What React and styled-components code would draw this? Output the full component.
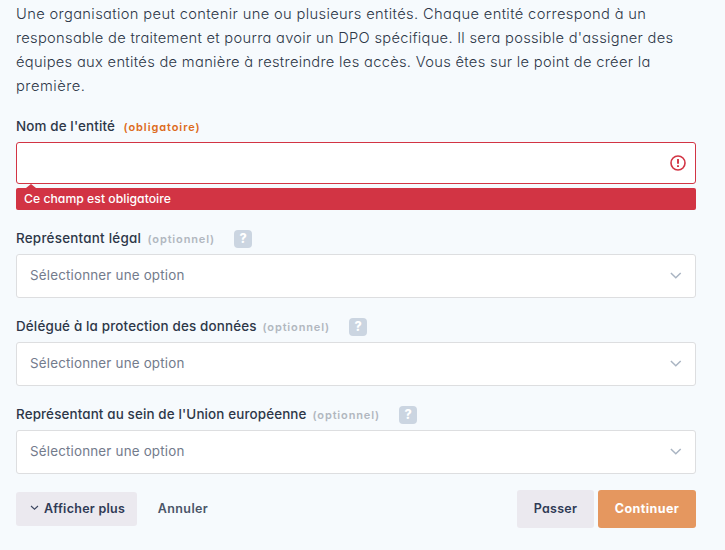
import React from "react";
import styled, { createGlobalStyle } from "styled-components";

const GlobalStyle = createGlobalStyle`
  * { box-sizing: border-box; }
  body {
    margin: 0;
    background: #f6fafd;
    color: #2d3748;
    font-family: Inter, "Open Sans", sans-serif;
    font-feature-settings: "cv11", "ss03";
  }
`;

const Page = styled.main`
  width: 725px;
  height: 550px;
  overflow: hidden;
  padding: 2px 29px 0 16px;
  display: flex;
  flex-direction: column;
`;

const Intro = styled.p`
  margin: 0;
  height: 112px;
  font-size: 14.7px;
  font-weight: 300;
  line-height: 24px;
  white-space: nowrap;
`;

const Line = styled.span`
  display: block;
  letter-spacing: ${(p) => p.$tracking}px;
`;

const Field = styled.section`
  display: flex;
  flex-direction: column;
  height: ${(p) => (p.$invalid ? 112 : 88)}px;
`;

const FieldHead = styled.div`
  display: flex;
  align-items: center;
  height: 28px;
  padding-bottom: 2px;
  white-space: nowrap;
`;

const Label = styled.label`
  width: ${(p) => p.$width}px;
  padding-bottom: 2px;
  font-size: 13.4px;
  font-weight: 500;
  line-height: 20px;
  letter-spacing: ${(p) => p.$tracking}px;
`;

const Hint = styled.span`
  width: ${(p) => (p.$required ? 80 : 86.5)}px;
  padding-bottom: 1px;
  font-size: 11px;
  font-weight: 600;
  line-height: 18px;
  letter-spacing: ${(p) => (p.$required ? 0.92 : 0.85)}px;
  color: ${(p) => (p.$required ? "#dd6b20" : "#b1b7bf")};
`;

const Help = styled.button`
  display: grid;
  place-items: center;
  width: 18px;
  height: 18px;
  padding: 0;
  border: 0;
  border-radius: 4px;
  background: #cbd5e1;
  color: #fff;
  font: 800 12.5px/18px Inter, sans-serif;
`;

const Control = styled.div`
  display: flex;
  align-items: center;
  justify-content: space-between;
  flex: none;
  height: ${(p) => (p.$invalid ? 42 : 44)}px;
  padding: 0 ${(p) => (p.$invalid ? 9 : 13)}px 0 13px;
  border: 1px solid ${(p) => (p.$invalid ? "#d23444" : "#dddee0")};
  border-radius: 3px;
  background: #fff;
`;

const TextInput = styled.input`
  flex: 1;
  min-width: 0;
  border: 0;
  outline: 0;
  background: transparent;
  font: inherit;
`;

const Placeholder = styled.span`
  padding-bottom: 2px;
  font-size: 13.4px;
  line-height: 20px;
  letter-spacing: 0.18px;
  color: #737b8c;
`;

const ErrorNote = styled.div`
  flex: none;
  margin-top: 4px;
  height: 22px;
  padding-left: 8px;
  border-radius: 2px;
  background: #d23444;
  color: #fff;
  font-size: 12.2px;
  font-weight: 500;
  line-height: 22px;
  letter-spacing: 0.03px;
  position: relative;

  &::before {
    content: "";
    position: absolute;
    left: 10px;
    top: -4px;
    border: 5px solid transparent;
    border-top: 0;
    border-bottom: 4px solid #d23444;
  }
`;

const Actions = styled.footer`
  display: flex;
  align-items: center;
  height: 38px;
`;

const Button = styled.button`
  display: flex;
  align-items: center;
  justify-content: ${(p) => (p.$leading ? "flex-start" : "center")};
  gap: 5px;
  width: ${(p) => p.$width}px;
  height: ${(p) => (p.$compact ? 34 : 38)}px;
  padding: 0 0 2px ${(p) => (p.$leading ? 14 : 0)}px;
  border: 0;
  border-radius: 3px;
  background: ${(p) => ({ primary: "#e5975f", muted: "#ebe9ef", plain: "transparent" })[p.$tone]};
  color: ${(p) => ({ primary: "#fff", muted: "#2f3a55", plain: "#4a5568" })[p.$tone]};
  font-family: inherit;
  font-feature-settings: inherit;
  font-size: 12.5px;
  font-weight: ${(p) => (p.$tone === "primary" ? 700 : 600)};
  letter-spacing: ${(p) => p.$tracking}px;
  white-space: nowrap;
`;

const SubmitGroup = styled.div`
  display: flex;
  gap: 4px;
  margin-left: auto;
`;

const Icon = styled.svg`
  flex: none;
  display: block;
  fill: none;
`;

const AlertIcon = () => (
  <Icon width="16" height="16" viewBox="0 0 16 16" stroke="#d23444">
    <circle cx="8" cy="8" r="7" strokeWidth="1.6" />
    <path d="M8 4v4.8M8 10.2v1.8" strokeWidth="1.9" />
  </Icon>
);

const SelectChevron = () => (
  <Icon width="12" height="8" viewBox="0 0 12 8" stroke="#a9b4c2" strokeWidth="1.5">
    <path d="M.9 1l4.9 4.8L10.7 1" />
  </Icon>
);

const MoreChevron = () => (
  <Icon width="9" height="8" viewBox="0 0 9 8" stroke="#3b4660" strokeWidth="1.1">
    <path d="M1 2l3.5 3.2L8 2" />
  </Icon>
);

const INTRO = [
  ["Une organisation peut contenir une ou plusieurs entités. Chaque entité correspond à un", 0.355],
  ["responsable de traitement et pourra avoir un DPO spécifique. Il sera possible d'assigner des", 0.285],
  ["équipes aux entités de manière à restreindre les accès. Vous êtes sur le point de créer la", 0.305],
  ["première.", 0.5],
];

const SELECTS = [
  { label: "Représentant légal", width: 131.5, tracking: 0.25 },
  { label: "Délégué à la protection des données", width: 246.5, tracking: 0.165 },
  { label: "Représentant au sein de l'Union européenne", width: 296.5, tracking: 0.14 },
];

export default function App() {
  return (
    <Page>
      <GlobalStyle />
      <Intro>
        {INTRO.map(([text, tracking]) => (
          <Line key={text} $tracking={tracking}>{text}</Line>
        ))}
      </Intro>

      <Field $invalid>
        <FieldHead>
          <Label htmlFor="entity" $width={107.5} $tracking={0.14}>Nom de l'entité</Label>
          <Hint $required>(obligatoire)</Hint>
        </FieldHead>
        <Control $invalid>
          <TextInput id="entity" />
          <AlertIcon />
        </Control>
        <ErrorNote>Ce champ est obligatoire</ErrorNote>
      </Field>

      {SELECTS.map(({ label, width, tracking }) => (
        <Field key={label}>
          <FieldHead>
            <Label $width={width} $tracking={tracking}>{label}</Label>
            <Hint>(optionnel)</Hint>
            <Help type="button">?</Help>
          </FieldHead>
          <Control>
            <Placeholder>Sélectionner une option</Placeholder>
            <SelectChevron />
          </Control>
        </Field>
      ))}

      <Actions>
        <Button $tone="muted" $compact $leading $width={121} $tracking={0.27}>
          <MoreChevron />
          Afficher plus
        </Button>
        <Button $tone="plain" $compact $width={92} $tracking={0.38}>Annuler</Button>
        <SubmitGroup>
          <Button $tone="muted" $width={77} $tracking={0.25}>Passer</Button>
          <Button $tone="primary" $width={98} $tracking={0.42}>Continuer</Button>
        </SubmitGroup>
      </Actions>
    </Page>
  );
}
